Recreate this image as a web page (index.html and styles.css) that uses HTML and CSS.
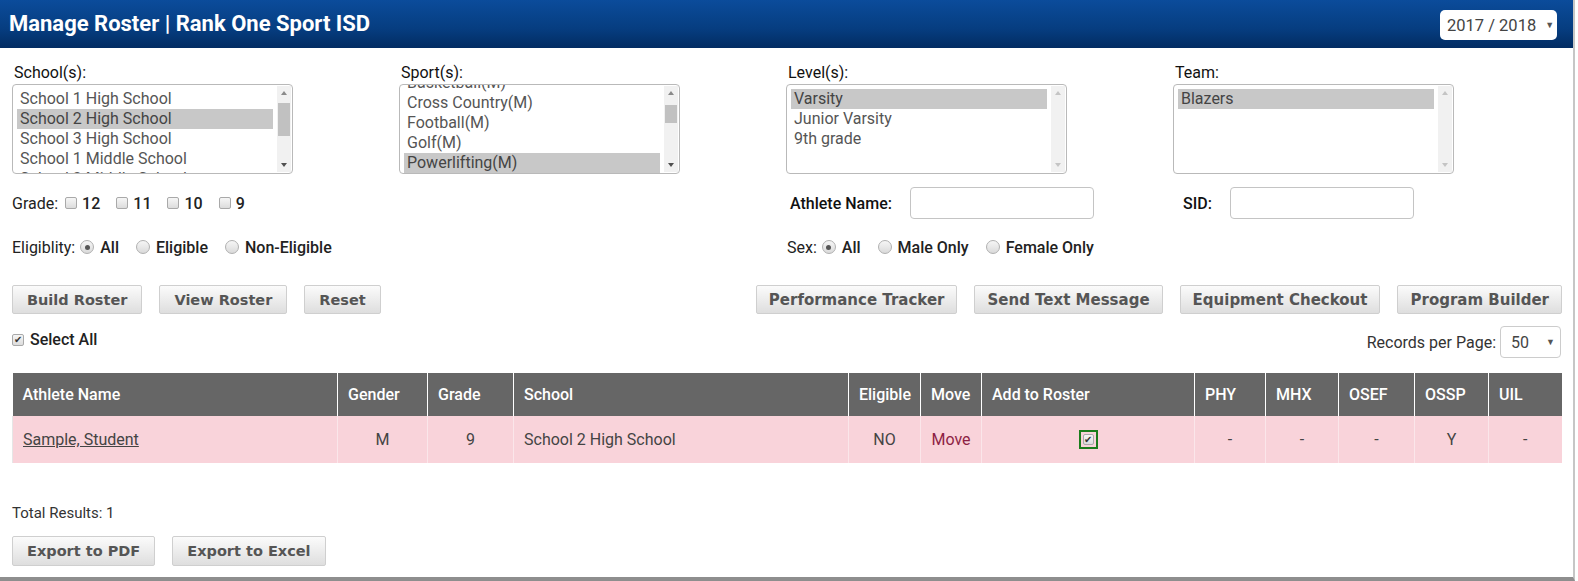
FILE: index.html
```html
<!DOCTYPE html>
<html lang="en">
<head>
    <meta charset="UTF-8">
    <meta name="viewport" content="width=device-width, initial-scale=1.0">
    <title>Manage Roster | Rank One Sport ISD</title>
    <link rel="stylesheet" href="styles.css">
</head>
<body>
    <div class="page">
        <header class="topbar">
            <h1>Manage Roster | Rank One Sport ISD</h1>
            <div class="year-select">2017 / 2018 <span class="caret">&#9660;</span></div>
        </header>

        <section class="filters">
            <div class="field">
                <label>School(s):</label>
                <div class="listbox">
                    <div class="options">
                        <div class="option">School 1 High School</div>
                        <div class="option selected">School 2 High School</div>
                        <div class="option">School 3 High School</div>
                        <div class="option">School 1 Middle School</div>
                        <div class="option">School 2 Middle School</div>
                    </div>
                    <div class="scrollbar">
                        <span class="arrow up"></span>
                        <span class="thumb" style="top: 17px; height: 33px;"></span>
                        <span class="arrow down"></span>
                    </div>
                </div>
            </div>
            <div class="field">
                <label>Sport(s):</label>
                <div class="listbox">
                    <div class="options scrolled">
                        <div class="option">Basketball(M)</div>
                        <div class="option">Cross Country(M)</div>
                        <div class="option">Football(M)</div>
                        <div class="option">Golf(M)</div>
                        <div class="option selected">Powerlifting(M)</div>
                    </div>
                    <div class="scrollbar">
                        <span class="arrow up"></span>
                        <span class="thumb" style="top: 19px; height: 18px;"></span>
                        <span class="arrow down"></span>
                    </div>
                </div>
            </div>
            <div class="field">
                <label>Level(s):</label>
                <div class="listbox">
                    <div class="options">
                        <div class="option selected">Varsity</div>
                        <div class="option">Junior Varsity</div>
                        <div class="option">9th grade</div>
                    </div>
                    <div class="scrollbar idle">
                        <span class="arrow up"></span>
                        <span class="arrow down"></span>
                    </div>
                </div>
            </div>
            <div class="field">
                <label>Team:</label>
                <div class="listbox">
                    <div class="options">
                        <div class="option selected">Blazers</div>
                    </div>
                    <div class="scrollbar idle">
                        <span class="arrow up"></span>
                        <span class="arrow down"></span>
                    </div>
                </div>
            </div>

            <div class="inline span2 grades">
                <span class="caption">Grade:</span>
                <span class="choice"><span class="cb"></span>12</span>
                <span class="choice"><span class="cb"></span>11</span>
                <span class="choice"><span class="cb"></span>10</span>
                <span class="choice"><span class="cb"></span>9</span>
            </div>
            <div class="inline text-field">
                <span class="caption strong">Athlete Name:</span>
                <span class="text-input"></span>
            </div>
            <div class="inline text-field sid">
                <span class="caption strong">SID:</span>
                <span class="text-input"></span>
            </div>

            <div class="inline span2 radios">
                <span class="caption">Eligiblity:</span>
                <span class="choice"><span class="radio on"></span>All</span>
                <span class="choice"><span class="radio"></span>Eligible</span>
                <span class="choice"><span class="radio"></span>Non-Eligible</span>
            </div>
            <div class="inline span2 radios sex">
                <span class="caption">Sex:</span>
                <span class="choice"><span class="radio on"></span>All</span>
                <span class="choice"><span class="radio"></span>Male Only</span>
                <span class="choice"><span class="radio"></span>Female Only</span>
            </div>
        </section>

        <div class="actions">
            <div class="btn-group">
                <button class="btn">Build Roster</button>
                <button class="btn">View Roster</button>
                <button class="btn">Reset</button>
            </div>
            <div class="btn-group tools">
                <button class="btn">Performance Tracker</button>
                <button class="btn">Send Text Message</button>
                <button class="btn">Equipment Checkout</button>
                <button class="btn">Program Builder</button>
            </div>
        </div>

        <div class="list-tools">
            <span class="choice select-all"><span class="cb checked">&#10004;</span>Select All</span>
            <div class="per-page">
                Records per Page:
                <div class="small-select">50 <span class="caret">&#9660;</span></div>
            </div>
        </div>

        <table class="roster">
            <colgroup>
                <col style="width: 325px">
                <col style="width: 90px">
                <col style="width: 86px">
                <col style="width: 335px">
                <col style="width: 72px">
                <col style="width: 61px">
                <col style="width: 213px">
                <col style="width: 71px">
                <col style="width: 73px">
                <col style="width: 76px">
                <col style="width: 74px">
                <col style="width: 73px">
            </colgroup>
            <thead>
                <tr>
                    <th>Athlete Name</th>
                    <th>Gender</th>
                    <th>Grade</th>
                    <th>School</th>
                    <th>Eligible</th>
                    <th>Move</th>
                    <th>Add to Roster</th>
                    <th>PHY</th>
                    <th>MHX</th>
                    <th>OSEF</th>
                    <th>OSSP</th>
                    <th>UIL</th>
                </tr>
            </thead>
            <tbody>
                <tr class="ineligible">
                    <td><a href="#">Sample, Student</a></td>
                    <td class="c">M</td>
                    <td class="c">9</td>
                    <td>School 2 High School</td>
                    <td class="c">NO</td>
                    <td class="c"><a href="#" class="move">Move</a></td>
                    <td class="c"><span class="added"><span class="cb checked">&#10004;</span></span></td>
                    <td class="c">-</td>
                    <td class="c">-</td>
                    <td class="c">-</td>
                    <td class="c">Y</td>
                    <td class="c">-</td>
                </tr>
            </tbody>
        </table>

        <div class="results">
            <p class="total">Total Results: 1</p>
            <div class="btn-group">
                <button class="btn">Export to PDF</button>
                <button class="btn">Export to Excel</button>
            </div>
        </div>
    </div>
</body>
</html>
```

FILE: styles.css
```css
body {
    margin: 0;
    background-color: #ffffff;
    color: #222222;
    font-family: Roboto, "Liberation Sans", Arial, sans-serif;
    font-size: 16px;
}

.page {
    width: 1573px;
    height: 577px;
    border-right: 2px solid #c6c6c6;
    border-bottom: 4px solid #8e8e8e;
    overflow: hidden;
}

/* top bar */
.topbar {
    height: 48px;
    background: linear-gradient(#0b4c9b, #063d80 60%, #022c62);
    display: flex;
    align-items: center;
    justify-content: space-between;
    padding: 0 16px 0 9px;
}

.topbar h1 {
    margin: 0 0 1px 0;
    color: #ffffff;
    font-size: 22px;
    font-weight: 700;
}

.year-select {
    background-color: #ffffff;
    border-radius: 5px;
    height: 30px;
    width: 117px;
    box-sizing: border-box;
    padding: 0 0 0 7px;
    display: flex;
    align-items: center;
    gap: 9px;
    color: #444444;
    font-size: 16.5px;
    margin-top: 2px;
}

.caret {
    font-size: 9px;
    color: #555555;
}

/* filters */
.filters {
    display: grid;
    grid-template-columns: 387px 387px 387px 387px;
    padding: 15px 12px 0 12px;
}

.field label {
    display: block;
    line-height: 19px;
    margin-bottom: 2px;
    color: #111111;
    padding-left: 2px;
}

.listbox {
    width: 281px;
    height: 90px;
    box-sizing: border-box;
    border: 1px solid #b9b9b9;
    border-radius: 4px;
    display: flex;
    overflow: hidden;
    background-color: #ffffff;
}

.options {
    flex: 1;
    padding: 4px 4px 0 4px;
    overflow: hidden;
}

.options.scrolled {
    padding-top: 0;
}

.options.scrolled .option:first-child {
    margin-top: -12px;
}

.option {
    height: 20px;
    line-height: 20px;
    padding-left: 3px;
    color: #555555;
    white-space: nowrap;
}

.option.selected {
    background-color: #c8c8c8;
    color: #444444;
}

.scrollbar {
    width: 14px;
    margin: 1px 1px 1px 0;
    background-color: #f1f1f1;
    position: relative;
}

.scrollbar .arrow {
    position: absolute;
    left: 3.5px;
    width: 0;
    height: 0;
    border-left: 3.5px solid transparent;
    border-right: 3.5px solid transparent;
}

.scrollbar .arrow.up {
    top: 5px;
    border-bottom: 4px solid #8a8a8a;
}

.scrollbar .arrow.down {
    bottom: 5px;
    border-top: 4px solid #505050;
}

.scrollbar.idle .arrow.up {
    border-bottom-color: #c4c4c4;
}

.scrollbar.idle .arrow.down {
    border-top-color: #c4c4c4;
}

.scrollbar .thumb {
    position: absolute;
    left: 1px;
    right: 1px;
    background-color: #c1c1c1;
}

.inline {
    display: flex;
    align-items: center;
    margin-top: 13px;
    height: 32px;
}

.span2 {
    grid-column: span 2;
}

.radios {
    margin-top: 18px;
    height: 20px;
}

.caption {
    margin-right: 5px;
    color: #222222;
}

.caption.strong {
    font-weight: 500;
    color: #111111;
}

.choice {
    display: inline-flex;
    align-items: center;
    font-weight: 500;
    margin-right: 17px;
    color: #222222;
}

.grades .caption {
    margin-right: 7px;
}

.grades .choice {
    margin-right: 16px;
}

.cb {
    display: inline-flex;
    align-items: center;
    justify-content: center;
    width: 12px;
    height: 12px;
    box-sizing: border-box;
    border: 1px solid #a9a9a9;
    border-radius: 2px;
    background: linear-gradient(#f6f6f6, #dcdcdc);
    margin-right: 5px;
    font-size: 10px;
    line-height: 1;
    color: #333333;
}

.radio {
    display: inline-block;
    width: 14px;
    height: 14px;
    box-sizing: border-box;
    border: 1px solid #b0b0b0;
    border-radius: 50%;
    background: linear-gradient(#f6f6f6, #dadada);
    margin-right: 6px;
    position: relative;
}

.radio.on::after {
    content: "";
    position: absolute;
    left: 3.5px;
    top: 3.5px;
    width: 5px;
    height: 5px;
    border-radius: 50%;
    background-color: #555555;
}

.text-field {
    padding-left: 4px;
}

.text-field .caption {
    width: 120px;
    margin-right: 0;
}

.sid {
    padding-left: 10px;
}

.sid .caption {
    width: 47px;
}

.sex {
    padding-left: 1px;
}

.text-input {
    width: 184px;
    height: 32px;
    box-sizing: border-box;
    border: 1px solid #c4c4c4;
    border-radius: 4px;
    background-color: #ffffff;
}

/* buttons */
.actions {
    display: flex;
    justify-content: space-between;
    padding: 0 11px 0 12px;
    margin-top: 28px;
}

.btn-group {
    display: flex;
    gap: 17px;
}

.btn {
    height: 29px;
    padding: 0 14px;
    border: 1px solid #cfcfcf;
    border-radius: 2px;
    background: linear-gradient(#fbfbfb, #dedede);
    color: #555555;
    font-family: "DejaVu Sans", Verdana, sans-serif;
    font-size: 14.5px;
    font-weight: 700;
    cursor: pointer;
}

.tools .btn {
    font-size: 15px;
    padding: 0 12px;
}

.list-tools {
    display: flex;
    justify-content: space-between;
    align-items: flex-start;
    padding: 0 12px 0 12px;
    margin-top: 12px;
}

.select-all {
    line-height: 24px;
    margin-top: 2px;
}

.select-all .cb {
    margin-right: 6px;
}

.per-page {
    display: flex;
    align-items: center;
    gap: 4px;
    color: #333333;
}

.small-select {
    width: 61px;
    height: 32px;
    box-sizing: border-box;
    border: 1px solid #cccccc;
    border-radius: 4px;
    display: flex;
    align-items: center;
    gap: 17px;
    padding-left: 10px;
    color: #444444;
}

/* results table */
.roster {
    margin: 15px 0 0 12px;
    border-collapse: collapse;
    table-layout: fixed;
    width: 1549px;
}

.roster th {
    height: 43px;
    background-color: #666666;
    color: #ffffff;
    font-weight: 500;
    text-align: left;
    padding: 0 10px;
    border-left: 1px solid #ffffff;
    white-space: nowrap;
}

.roster th:first-child {
    border-left: none;
}

.roster td {
    height: 47px;
    padding: 0 10px;
    color: #444444;
    border-left: 1px solid #fbe6ea;
}

.roster td:first-child {
    border-left: 1px solid #e6e6e6;
}

.roster tr.ineligible td {
    background-color: #f9d3da;
}

.roster td.c {
    text-align: center;
}

.roster a {
    color: #444444;
}

.roster a.move {
    color: #8e1f45;
    text-decoration: none;
}

.added {
    display: inline-flex;
    padding: 2px;
    border: 2px solid #1b7c1b;
    vertical-align: middle;
    margin-top: -2px;
}

.added .cb {
    margin: 0;
    width: 11px;
    height: 11px;
}

.results {
    padding: 0 12px;
    margin-top: 41px;
}

.total {
    margin: 0 0 14px 0;
    line-height: 18px;
    color: #333333;
    font-size: 15px;
}

.results .btn {
    height: 30px;
}
```
